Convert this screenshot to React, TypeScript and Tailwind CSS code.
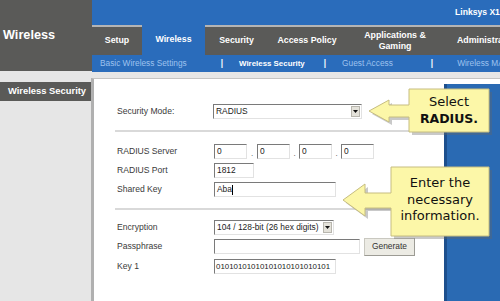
import React from "react";

const inputCls =
  "h-[15px] shrink-0 bg-white border border-t-[#7a7a7a] border-l-[#7a7a7a] border-r-[#e2e2e2] border-b-[#e2e2e2] flex items-center pl-[2px] text-[8.4px] text-[#222] whitespace-nowrap overflow-hidden";

function Arrow() {
  return (
    <div className="w-[9px] h-[11px] shrink-0 bg-[#e4e2da] border border-[#b8b6ae] flex items-center justify-center">
      <svg width="5" height="3" viewBox="0 0 5 3">
        <polygon points="0,0 5,0 2.5,3" fill="#111" />
      </svg>
    </div>
  );
}

function Row({ label, children, className = "" }: { label: string; children: React.ReactNode; className?: string }) {
  return (
    <div className={"flex items-center h-[15px] pl-[23px] " + className}>
      <div className="w-[97px] shrink-0 text-[8.6px] text-[#3a3a3a] whitespace-nowrap">{label}</div>
      {children}
    </div>
  );
}

export default function App() {
  const sep = <div className="h-[2px] bg-[#d9d9d9] ml-[21px]" />;
  return (
    <div className="w-[500px] h-[301px] overflow-hidden relative bg-[#e6e6e6] font-['Liberation_Sans',Arial,sans-serif] flex flex-col">
      {/* header */}
      <div className="flex h-[72px] shrink-0">
        <div className="w-[92px] shrink-0 h-[71px] bg-[#5a5a58] flex items-center pl-[3px] text-white font-bold text-[12.7px]">
          Wireless
        </div>
        <div className="flex-1 min-w-0 flex flex-col overflow-hidden">
          <div className="h-[25px] bg-[#2a6cbb] flex items-center pl-[363px] text-white font-bold text-[8.6px] whitespace-nowrap overflow-hidden">
            Linksys X1000
          </div>
          <div className="h-[30px] flex text-white font-bold text-[8.8px] whitespace-nowrap overflow-hidden">
            <div className="w-[50px] shrink-0 bg-[#5a5a58] border-t-2 border-[#b4b4b4] flex items-center justify-center">Setup</div>
            <div className="w-[63px] shrink-0 bg-[#2a6cbb] flex items-center justify-center">Wireless</div>
            <div className="w-[63px] shrink-0 bg-[#5a5a58] border-t-2 border-[#b4b4b4] flex items-center justify-center">Security</div>
            <div className="w-[78px] shrink-0 bg-[#5a5a58] border-t-2 border-[#b4b4b4] flex items-center justify-center">Access Policy</div>
            <div className="w-[98px] shrink-0 bg-[#5a5a58] border-t-2 border-[#b4b4b4] flex items-center justify-center text-center leading-[11px]">
              Applications &amp;
              <br />
              Gaming
            </div>
            <div className="w-[120px] shrink-0 bg-[#5a5a58] border-t-2 border-[#b4b4b4] flex items-center pl-[13px]">Administration</div>
          </div>
          <div className="h-[17px] bg-[#2a6cbb] flex items-center text-[8.3px] whitespace-nowrap overflow-hidden">
            <span className="shrink-0 ml-[8px] text-[#9ec2ee]">Basic Wireless Settings</span>
            <span className="shrink-0 ml-[34px] text-white font-bold">|</span>
            <span className="shrink-0 ml-[16px] text-white font-bold text-[7.9px]">Wireless Security</span>
            <span className="shrink-0 ml-[19px] text-white font-bold">|</span>
            <span className="shrink-0 ml-[16px] text-[#9ec2ee]">Guest Access</span>
            <span className="shrink-0 ml-[38px] text-white font-bold">|</span>
            <span className="shrink-0 ml-[24px] text-[#9ec2ee]">Wireless MAC Filter</span>
          </div>
        </div>
      </div>

      {/* body */}
      <div className="flex flex-1">
        <div className="w-[91px] shrink-0 pt-[10px]">
          <div className="h-[19px] bg-[#5a5a58] flex items-center pl-[8px] text-white font-bold text-[9.4px] whitespace-nowrap">
            Wireless Security
          </div>
        </div>
        <div className="flex-1 min-w-0 mt-[6px] bg-white border-t border-t-[#c4c4c4] border-l-[3px] border-l-[#b0b0b0] flex">
          <div className="flex-1 min-w-0 flex flex-col pt-[25px]">
            <Row label="Security Mode:">
              <div className={inputCls + " w-[149px] -ml-[1px] justify-between pr-[1px]"}>
                <span>RADIUS</span>
                <Arrow />
              </div>
            </Row>
            <div className="mt-[11px]">{sep}</div>
            <Row label="RADIUS Server" className="mt-[12px]">
              <div className="flex items-end">
                <div className={inputCls + " w-[33px]"}>0</div>
                <span className="w-[10px] text-center text-[8px] text-[#444] leading-[10px]">.</span>
                <div className={inputCls + " w-[33px]"}>0</div>
                <span className="w-[9px] text-center text-[8px] text-[#444] leading-[10px]">.</span>
                <div className={inputCls + " w-[33px]"}>0</div>
                <span className="w-[9px] text-center text-[8px] text-[#444] leading-[10px]">.</span>
                <div className={inputCls + " w-[33px]"}>0</div>
              </div>
            </Row>
            <Row label="RADIUS Port" className="mt-[4px]">
              <div className={inputCls + " w-[40px]"}>1812</div>
            </Row>
            <Row label="Shared Key" className="mt-[4px]">
              <div className={inputCls + " w-[122px]"}>
                Aba<span className="inline-block w-[1px] h-[10px] bg-black" />
              </div>
            </Row>
            <div className="mt-[11px]">{sep}</div>
            <Row label="Encryption" className="mt-[10px]">
              <div className={inputCls + " w-[120px] justify-between pr-[1px]"}>
                <span>104 / 128-bit (26 hex digits)</span>
                <Arrow />
              </div>
            </Row>
            <Row label="Passphrase" className="mt-[4px]">
              <div className={inputCls + " w-[146px]"} />
              <div className="ml-[4px] shrink-0 w-[51px] h-[18px] bg-[#ecebe4] border border-[#c9c8c0] border-b-[#9c9b94] border-r-[#9c9b94] flex items-center justify-center text-[8.4px] text-[#333]">
                Generate
              </div>
            </Row>
            <Row label="Key 1" className="mt-[5px]">
              <div className={inputCls + " w-[122px] !text-[7.9px] !pl-[1px]"}>01010101010101010101010101</div>
            </Row>
          </div>
          <div className="w-[56px] shrink-0 pt-[5px] flex flex-col">
            <div className="flex-1 bg-[#2a6ab3] border-l-[3px] border-l-[#1d4f8d]" />
          </div>
        </div>
      </div>

      {/* callouts */}
      <svg className="absolute left-0 top-0" width="500" height="301" viewBox="0 0 500 301">
        <g transform="translate(3,3)" opacity="0.35">
          <polygon points="369,111 389,100 389,105 409,105 409,89 489,89 489,132 409,132 409,117 389,117 389,122" fill="#666" />
          <polygon points="343,200 365,184 365,193 391,193 391,167 489,167 489,236 391,236 391,208 365,208 365,216" fill="#666" />
        </g>
        <polygon points="369,111 389,100 389,105 409,105 409,89 489,89 489,132 409,132 409,117 389,117 389,122" fill="#fcf7a8" stroke="#c6bd80" strokeWidth="1" />
        <polygon points="343,200 365,184 365,193 391,193 391,167 489,167 489,236 391,236 391,208 365,208 365,216" fill="#fcf7a8" stroke="#c6bd80" strokeWidth="1" />
      </svg>
      <div className="absolute left-[409px] top-[93px] w-[80px] text-center font-['DejaVu_Sans',Verdana,sans-serif] text-[13px] leading-[17px] text-[#111]">
        Select
        <br />
        <span className="font-bold text-[12.5px]">RADIUS.</span>
      </div>
      <div className="absolute left-[391px] top-[175px] w-[98px] text-center font-['DejaVu_Sans',Verdana,sans-serif] text-[13px] leading-[16.5px] text-[#111]">
        Enter the
        <br />
        necessary
        <br />
        information.
      </div>
    </div>
  );
}
